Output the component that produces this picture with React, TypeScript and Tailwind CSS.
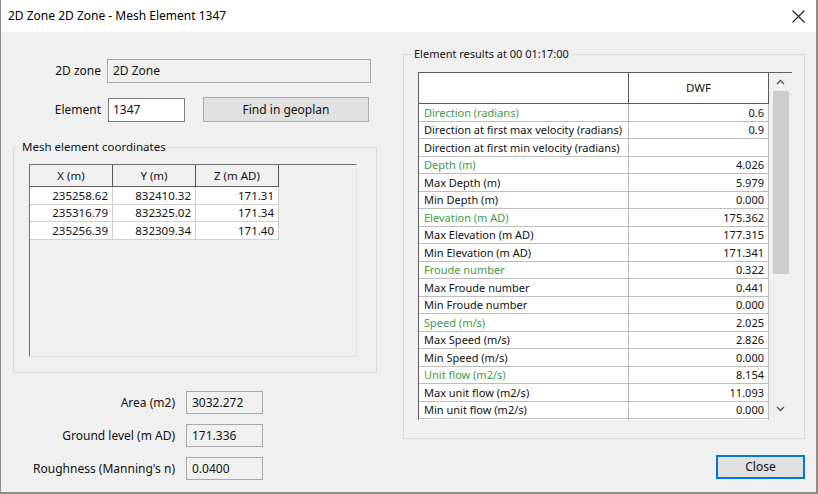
import React from "react";

const results: [string, string, boolean][] = [
  ["Direction (radians)", "0.6", true],
  ["Direction at first max velocity (radians)", "0.9", false],
  ["Direction at first min velocity (radians)", "", false],
  ["Depth (m)", "4.026", true],
  ["Max Depth (m)", "5.979", false],
  ["Min Depth (m)", "0.000", false],
  ["Elevation (m AD)", "175.362", true],
  ["Max Elevation (m AD)", "177.315", false],
  ["Min Elevation (m AD)", "171.341", false],
  ["Froude number", "0.322", true],
  ["Max Froude number", "0.441", false],
  ["Min Froude number", "0.000", false],
  ["Speed (m/s)", "2.025", true],
  ["Max Speed (m/s)", "2.826", false],
  ["Min Speed (m/s)", "0.000", false],
  ["Unit flow (m2/s)", "8.154", true],
  ["Max unit flow (m2/s)", "11.093", false],
  ["Min unit flow (m2/s)", "0.000", false],
  ["", "", false],
];

const coords = [
  ["235258.62", "832410.32", "171.31"],
  ["235316.79", "832325.02", "171.34"],
  ["235256.39", "832309.34", "171.40"],
];

function Chevron({ down }: { down?: boolean }) {
  return (
    <svg width="9" height="6" viewBox="0 0 9 6" className="block">
      <path
        d={down ? "M1 1 L4.5 4.5 L8 1" : "M1 5 L4.5 1.5 L8 5"}
        fill="none"
        stroke="#505050"
        strokeWidth="1.3"
      />
    </svg>
  );
}

export default function App() {
  return (
    <div className="w-[818px] h-[494px] bg-[#f0f0f0] flex flex-col font-['Noto_Sans',sans-serif] text-[12px] leading-none text-[#111] border-l border-r-2 border-b-2 border-[#8c8c8c] overflow-hidden">
      {/* Title bar */}
      <div className="h-[32px] bg-white flex items-center justify-between pl-[7px] pr-[11px] shrink-0">
        <span className="text-[12px] text-black">2D Zone 2D Zone - Mesh Element 1347</span>
        <svg width="13" height="13" viewBox="0 0 13 13">
          <path d="M0.5 0.5 L12.5 12.5 M12.5 0.5 L0.5 12.5" stroke="#222" strokeWidth="1.1" />
        </svg>
      </div>

      {/* Body */}
      <div className="flex flex-1">
        {/* Left column */}
        <div className="w-[402px] shrink-0 flex flex-col pt-[27px]">
          <div className="flex items-center h-[24px]">
            <span className="w-[100px] text-right">2D zone</span>
            <div className="ml-[6px] w-[264px] h-[24px] border border-[#a8a8a8] bg-[#f0f0f0] flex items-center pl-[5px]">
              2D Zone
            </div>
          </div>
          <div className="flex items-center h-[25px] mt-[14px]">
            <span className="w-[100px] text-right">Element</span>
            <div className="ml-[7px] w-[77px] h-[24px] border border-[#7a7a7a] bg-white flex items-center pl-[4px]">
              1347
            </div>
            <div className="ml-[18px] w-[166px] h-[25px] border border-[#adadad] bg-[#e1e1e1] flex items-center justify-center">
              Find in geoplan
            </div>
          </div>

          <fieldset className="ml-[12px] mt-[17px] w-[364px] h-[234px] border border-[#dcdcdc]">
            <legend className="ml-[6px] px-[2px] h-[16px] leading-[16px] text-[11.5px]">Mesh element coordinates</legend>
            <div className="ml-[15px] mt-[9px] w-[328px] h-[193px] border-t border-l border-[#707070] border-r border-b border-r-[#e3e3e3] border-b-[#e3e3e3] bg-[#f0f0f0] text-[11.5px]">
              <div className="flex h-[22px]">
                {["X (m)", "Y (m)", "Z (m AD)"].map((h) => (
                  <div
                    key={h}
                    className="w-[83px] h-full border-r border-b border-[#5a5a5a] flex items-center justify-center bg-[#f0f0f0]"
                  >
                    {h}
                  </div>
                ))}
              </div>
              {coords.map((r, i) => (
                <div key={i} className="flex h-[17.5px]">
                  {r.map((c, j) => (
                    <div
                      key={j}
                      className="w-[83px] h-full border-r border-b border-[#d0d0d0] bg-white flex items-center justify-end pr-[4px]"
                    >
                      {c}
                    </div>
                  ))}
                </div>
              ))}
            </div>
          </fieldset>

          <div className="flex flex-col gap-[10px] mt-[18px]">
            {[
              ["Area (m2)", "3032.272"],
              ["Ground level (m AD)", "171.336"],
              ["Roughness (Manning's n)", "0.0400"],
            ].map(([l, v]) => (
              <div key={l} className="flex items-center h-[23px]">
                <span className="w-[174px] text-right">{l}</span>
                <div className="ml-[11px] w-[77px] h-[23px] border border-[#a8a8a8] bg-[#f0f0f0] flex items-center pl-[5px]">
                  {v}
                </div>
              </div>
            ))}
          </div>
        </div>

        {/* Right column */}
        <div className="flex flex-col pt-[14px]">
          <fieldset className="w-[402px] h-[393px] border border-[#dcdcdc]">
            <legend className="ml-[8px] px-[2px] h-[16px] leading-[16px] text-[11px]">Element results at 00 01:17:00</legend>
            <div className="ml-[14px] mt-[10px] w-[374px] h-[348px] flex border-t border-l border-[#5f5f5f] overflow-hidden text-[11px]">
              <div className="w-[350px] h-full bg-white overflow-hidden">
                <div className="flex h-[31px] text-[11.5px]">
                  <div className="w-[210px] h-full border-r border-b border-[#5a5a5a] bg-white" />
                  <div className="w-[140px] h-full border-r border-b border-[#5a5a5a] bg-white flex items-center justify-center">
                    DWF
                  </div>
                </div>
                {results.map(([n, v, g], i) => (
                  <div key={i} className="flex h-[17.5px]">
                    <div
                      className={`w-[210px] h-full border-r border-b border-[#bdbdbd] flex items-center pl-[5px] whitespace-nowrap ${
                        g ? "text-[#3f9b3f]" : ""
                      }`}
                    >
                      {n}
                    </div>
                    <div className="w-[140px] h-full border-r border-b border-[#bdbdbd] flex items-center justify-end pr-[4px]">
                      {v}
                    </div>
                  </div>
                ))}
              </div>
              <div className="w-[23px] h-full bg-[#f0f0f0] flex flex-col items-center">
                <div className="h-[18px] flex items-center justify-center">
                  <Chevron />
                </div>
                <div className="w-[16px] h-[183px] bg-[#cdcdcd]" />
                <div className="flex-1" />
                <div className="h-[18px] flex items-center justify-center mb-[2px]">
                  <Chevron down />
                </div>
              </div>
            </div>
          </fieldset>
          <div className="flex justify-end mt-[16px] w-[402px]">
            <div className="w-[89px] h-[24px] border-2 border-[#0078d7] bg-[#e1e1e1] flex items-center justify-center">
              Close
            </div>
          </div>
        </div>
      </div>
    </div>
  );
}
